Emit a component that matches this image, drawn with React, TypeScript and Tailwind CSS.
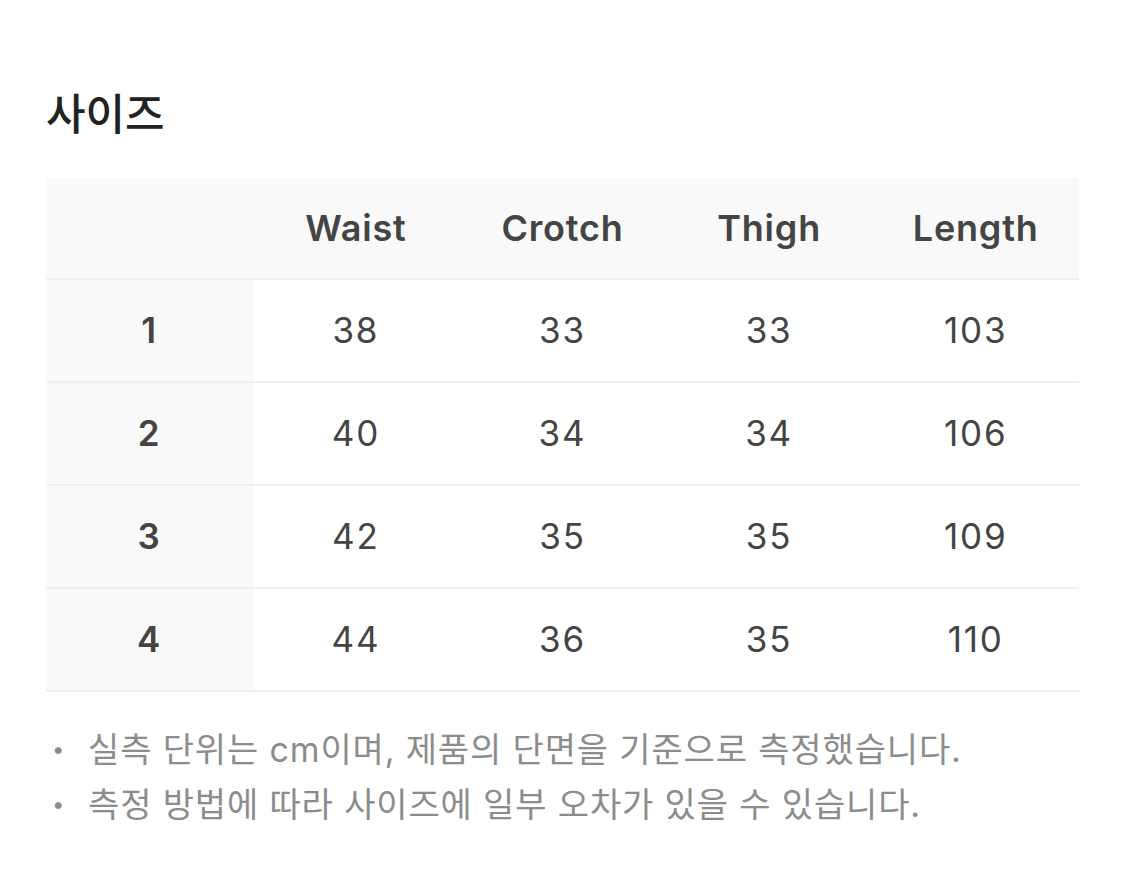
import React from "react";

const rows = [
  ["1", "38", "33", "33", "103"],
  ["2", "40", "34", "34", "106"],
  ["3", "42", "35", "35", "109"],
  ["4", "44", "36", "35", "110"],
];

export default function App() {
  return (
    <div
      className="min-h-[869px] w-[1125px] bg-white"
      style={{ fontFamily: '"Inter", "Noto Sans CJK KR", sans-serif' }}
    >
      <div className="px-[46px] pt-[86px]">
        <h2 className="text-[43px] font-medium leading-[56px] text-[#222]">사이즈</h2>
        <div className="mt-[36px] w-[1033px]">
          <div className="grid h-[102px] grid-cols-5 items-center border-b-2 border-[#efefef] bg-[#f9f9f9]">
            <div />
            {["Waist", "Crotch", "Thigh", "Length"].map((h) => (
              <div key={h} className="text-center text-[36px] font-semibold tracking-[0.8px] text-[#444]">
                {h}
              </div>
            ))}
          </div>
          {rows.map((r) => (
            <div key={r[0]} className="grid h-[103px] grid-cols-5 border-b-2 border-[#efefef]">
              {r.map((c, i) => (
                <div
                  key={i}
                  className={
                    i === 0
                      ? "flex items-center justify-center bg-[#f9f9f9] text-[35px] font-semibold tracking-[1.5px] text-[#444]"
                      : "flex items-center justify-center text-[35px] tracking-[1.8px] text-[#444]"
                  }
                >
                  {c}
                </div>
              ))}
            </div>
          ))}
        </div>
        <ul className="mt-[30px] text-[34px] leading-[55px] tracking-[0.85px] text-[#8c8c8c]">
          <li className="flex items-center">
            <span className="w-[42px] pl-[6px] text-[22px]">•</span>
            <span>실측 단위는 cm이며, 제품의 단면을 기준으로 측정했습니다.</span>
          </li>
          <li className="flex items-center">
            <span className="w-[42px] pl-[6px] text-[22px]">•</span>
            <span>측정 방법에 따라 사이즈에 일부 오차가 있을 수 있습니다.</span>
          </li>
        </ul>
      </div>
    </div>
  );
}
